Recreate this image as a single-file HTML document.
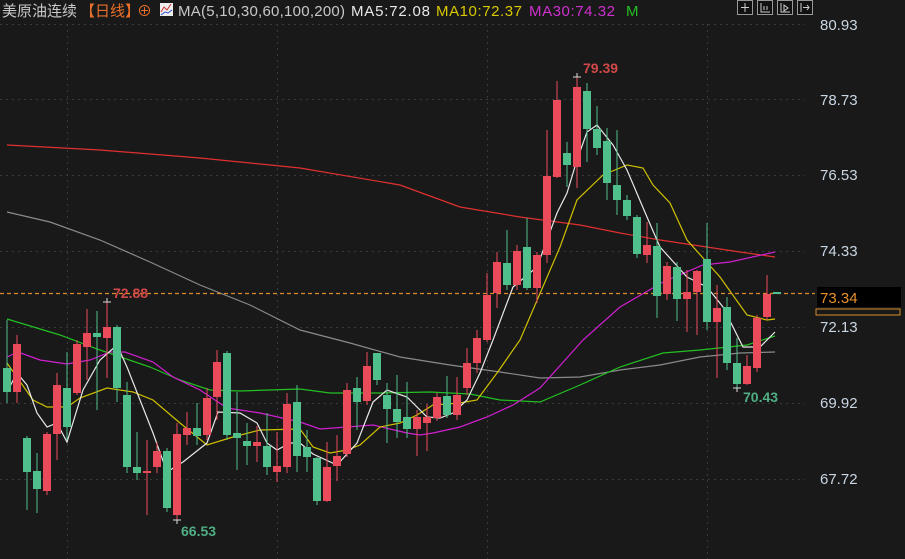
<!DOCTYPE html>
<html><head><meta charset="utf-8"><style>
html,body{margin:0;padding:0;background:#191919;width:905px;height:559px;overflow:hidden}
svg{display:block}
text{font-family:"Liberation Sans","Noto Sans CJK SC",sans-serif}
</style></head><body>
<svg width="905" height="559" xmlns="http://www.w3.org/2000/svg">
<rect width="905" height="559" fill="#191919"/>
<g stroke="#3a3a3a" stroke-dasharray="2,4" stroke-width="1">
<line x1="0" y1="24.5" x2="805" y2="24.5"/><line x1="0" y1="99.5" x2="805" y2="99.5"/>
<line x1="0" y1="175.5" x2="805" y2="175.5"/><line x1="0" y1="251.5" x2="805" y2="251.5"/>
<line x1="0" y1="327.5" x2="805" y2="327.5"/><line x1="0" y1="403.5" x2="805" y2="403.5"/>
<line x1="0" y1="479.5" x2="805" y2="479.5"/>
<line x1="67.5" y1="24" x2="67.5" y2="559"/><line x1="277.5" y1="24" x2="277.5" y2="559"/>
<line x1="487.5" y1="24" x2="487.5" y2="559"/><line x1="707.5" y1="24" x2="707.5" y2="559"/>
</g>
<g fill="none" stroke-width="1.2">
<polyline stroke="#e03030" points="7,145 100,150 200,158 300,168 400,185 460,207 520,217 580,225 620,233 660,240 700,246 740,252 775,257"/>
<polyline stroke="#8a8a8a" points="7,212 50,222 100,240 150,262 200,285 250,305 300,330 350,343 400,357 450,365 500,372 540,378 580,377 620,370 660,365 700,357 740,353 775,352"/>
<polyline stroke="#22c022" points="7,319 60,335 100,350 150,367 180,380 210,390 240,391 300,389 330,393 380,393 430,392 470,394 500,400 540,402 580,385 620,367 663,353 700,350 747,345 775,336"/>
<polyline stroke="#d020d0" points="7,357 18,352 40,360 67,364 90,360 110,352 125,352 153,362 173,377 200,390 227,408 260,413 300,422 320,429 347,427 373,425 407,433 420,435 433,433 460,427 487,417 513,405 540,388 583,340 620,307 663,282 703,265 730,262 775,252"/>
<polyline stroke="#d0c000" points="7,363 33,400 47,407 67,407 80,398 107,388 133,392 153,400 180,423 207,445 233,437 260,430 300,429 313,447 330,453 347,450 360,445 380,427 400,423 417,415 433,405 460,403 477,400 497,373 520,340 560,247 577,200 603,175 627,165 643,168 653,185 670,203 687,240 720,277 747,315 767,320 775,319"/>
<polyline stroke="#e8e8e8" points="7,392 17,373 27,385 37,413 47,427 57,423 67,442 83,390 100,360 117,345 127,367 140,400 153,433 167,472 183,462 207,443 218,412 240,413 257,423 267,443 277,450 290,443 300,443 313,454 337,465 357,443 373,402 387,390 407,397 427,417 440,418 453,413 467,400 480,373 493,340 513,287 537,267 557,213 567,193 577,160 587,132 597,125 613,145 627,170 647,217 660,247 687,277 707,287 723,307 743,347 760,347 775,332"/>
</g>
<line x1="0" y1="293.5" x2="815" y2="293.5" stroke="#d98a2a" stroke-dasharray="4,3" stroke-width="1.2"/>
<g id="c">
<line x1="7" y1="320" x2="7" y2="403" stroke="#4fbf8c"/><rect x="3" y="368" width="8" height="24" fill="#4fbf8c"/>
<line x1="17" y1="335" x2="17" y2="403" stroke="#e94b5b"/><rect x="13" y="344" width="8" height="48" fill="#e94b5b"/>
<line x1="27" y1="436" x2="27" y2="510" stroke="#4fbf8c"/><rect x="23" y="438" width="8" height="34" fill="#4fbf8c"/>
<line x1="37" y1="453" x2="37" y2="513" stroke="#4fbf8c"/><rect x="33" y="471" width="8" height="18" fill="#4fbf8c"/>
<line x1="47" y1="432" x2="47" y2="495" stroke="#e94b5b"/><rect x="43" y="434" width="8" height="57" fill="#e94b5b"/>
<line x1="57" y1="373" x2="57" y2="460" stroke="#e94b5b"/><rect x="53" y="385" width="8" height="49" fill="#e94b5b"/>
<line x1="67" y1="352" x2="67" y2="440" stroke="#4fbf8c"/><rect x="63" y="388" width="8" height="39" fill="#4fbf8c"/>
<line x1="77" y1="340" x2="77" y2="395" stroke="#e94b5b"/><rect x="73" y="344" width="8" height="49" fill="#e94b5b"/>
<line x1="87" y1="309" x2="87" y2="380" stroke="#e94b5b"/><rect x="83" y="333" width="8" height="14" fill="#e94b5b"/>
<line x1="97" y1="311" x2="97" y2="410" stroke="#4fbf8c"/><rect x="93" y="333" width="8" height="4" fill="#4fbf8c"/>
<line x1="107" y1="302" x2="107" y2="378" stroke="#e94b5b"/><rect x="103" y="327" width="8" height="11" fill="#e94b5b"/>
<line x1="117" y1="325" x2="117" y2="402" stroke="#4fbf8c"/><rect x="113" y="327" width="8" height="61" fill="#4fbf8c"/>
<line x1="127" y1="382" x2="127" y2="473" stroke="#4fbf8c"/><rect x="123" y="395" width="8" height="72" fill="#4fbf8c"/>
<line x1="137" y1="432" x2="137" y2="480" stroke="#4fbf8c"/><rect x="133" y="467" width="8" height="6" fill="#4fbf8c"/>
<line x1="147" y1="440" x2="147" y2="515" stroke="#e94b5b"/><rect x="143" y="471" width="8" height="2" fill="#e94b5b"/>
<line x1="157" y1="442" x2="157" y2="473" stroke="#e94b5b"/><rect x="153" y="451" width="8" height="16" fill="#e94b5b"/>
<line x1="167" y1="448" x2="167" y2="512" stroke="#4fbf8c"/><rect x="163" y="451" width="8" height="57" fill="#4fbf8c"/>
<line x1="177" y1="423" x2="177" y2="520" stroke="#e94b5b"/><rect x="173" y="434" width="8" height="81" fill="#e94b5b"/>
<line x1="187" y1="412" x2="187" y2="445" stroke="#e94b5b"/><rect x="183" y="428" width="8" height="7" fill="#e94b5b"/>
<line x1="197" y1="403" x2="197" y2="445" stroke="#4fbf8c"/><rect x="193" y="428" width="8" height="8" fill="#4fbf8c"/>
<line x1="207" y1="388" x2="207" y2="440" stroke="#e94b5b"/><rect x="203" y="398" width="8" height="37" fill="#e94b5b"/>
<line x1="217" y1="350" x2="217" y2="420" stroke="#e94b5b"/><rect x="213" y="362" width="8" height="35" fill="#e94b5b"/>
<line x1="227" y1="351" x2="227" y2="440" stroke="#4fbf8c"/><rect x="223" y="353" width="8" height="82" fill="#4fbf8c"/>
<line x1="237" y1="392" x2="237" y2="470" stroke="#4fbf8c"/><rect x="233" y="433" width="8" height="5" fill="#4fbf8c"/>
<line x1="247" y1="423" x2="247" y2="465" stroke="#4fbf8c"/><rect x="243" y="441" width="8" height="5" fill="#4fbf8c"/>
<line x1="257" y1="426" x2="257" y2="462" stroke="#e94b5b"/><rect x="253" y="442" width="8" height="4" fill="#e94b5b"/>
<line x1="267" y1="413" x2="267" y2="475" stroke="#4fbf8c"/><rect x="263" y="446" width="8" height="21" fill="#4fbf8c"/>
<line x1="277" y1="432" x2="277" y2="482" stroke="#e94b5b"/><rect x="273" y="466" width="8" height="6" fill="#e94b5b"/>
<line x1="287" y1="393" x2="287" y2="473" stroke="#e94b5b"/><rect x="283" y="404" width="8" height="63" fill="#e94b5b"/>
<line x1="297" y1="385" x2="297" y2="472" stroke="#4fbf8c"/><rect x="293" y="402" width="8" height="54" fill="#4fbf8c"/>
<line x1="307" y1="430" x2="307" y2="472" stroke="#4fbf8c"/><rect x="303" y="447" width="8" height="10" fill="#4fbf8c"/>
<line x1="317" y1="457" x2="317" y2="505" stroke="#4fbf8c"/><rect x="313" y="458" width="8" height="43" fill="#4fbf8c"/>
<line x1="327" y1="442" x2="327" y2="502" stroke="#e94b5b"/><rect x="323" y="467" width="8" height="34" fill="#e94b5b"/>
<line x1="337" y1="435" x2="337" y2="481" stroke="#e94b5b"/><rect x="333" y="456" width="8" height="10" fill="#e94b5b"/>
<line x1="347" y1="383" x2="347" y2="457" stroke="#e94b5b"/><rect x="343" y="390" width="8" height="64" fill="#e94b5b"/>
<line x1="357" y1="377" x2="357" y2="430" stroke="#4fbf8c"/><rect x="353" y="388" width="8" height="14" fill="#4fbf8c"/>
<line x1="367" y1="352" x2="367" y2="405" stroke="#e94b5b"/><rect x="363" y="366" width="8" height="35" fill="#e94b5b"/>
<line x1="377" y1="353" x2="377" y2="385" stroke="#4fbf8c"/><rect x="373" y="353" width="8" height="27" fill="#4fbf8c"/>
<line x1="387" y1="383" x2="387" y2="443" stroke="#4fbf8c"/><rect x="383" y="395" width="8" height="14" fill="#4fbf8c"/>
<line x1="397" y1="375" x2="397" y2="438" stroke="#4fbf8c"/><rect x="393" y="409" width="8" height="13" fill="#4fbf8c"/>
<line x1="407" y1="382" x2="407" y2="438" stroke="#4fbf8c"/><rect x="403" y="417" width="8" height="12" fill="#4fbf8c"/>
<line x1="417" y1="410" x2="417" y2="456" stroke="#e94b5b"/><rect x="413" y="417" width="8" height="12" fill="#e94b5b"/>
<line x1="427" y1="404" x2="427" y2="451" stroke="#e94b5b"/><rect x="423" y="417" width="8" height="6" fill="#e94b5b"/>
<line x1="437" y1="393" x2="437" y2="421" stroke="#e94b5b"/><rect x="433" y="397" width="8" height="21" fill="#e94b5b"/>
<line x1="447" y1="376" x2="447" y2="418" stroke="#4fbf8c"/><rect x="443" y="396" width="8" height="19" fill="#4fbf8c"/>
<line x1="457" y1="377" x2="457" y2="420" stroke="#e94b5b"/><rect x="453" y="395" width="8" height="20" fill="#e94b5b"/>
<line x1="467" y1="348" x2="467" y2="395" stroke="#e94b5b"/><rect x="463" y="363" width="8" height="25" fill="#e94b5b"/>
<line x1="477" y1="330" x2="477" y2="373" stroke="#e94b5b"/><rect x="473" y="338" width="8" height="25" fill="#e94b5b"/>
<line x1="487" y1="273" x2="487" y2="342" stroke="#e94b5b"/><rect x="483" y="295" width="8" height="45" fill="#e94b5b"/>
<line x1="497" y1="252" x2="497" y2="308" stroke="#e94b5b"/><rect x="493" y="262" width="8" height="31" fill="#e94b5b"/>
<line x1="507" y1="230" x2="507" y2="290" stroke="#4fbf8c"/><rect x="503" y="263" width="8" height="22" fill="#4fbf8c"/>
<line x1="517" y1="245" x2="517" y2="290" stroke="#e94b5b"/><rect x="513" y="251" width="8" height="34" fill="#e94b5b"/>
<line x1="527" y1="218" x2="527" y2="290" stroke="#4fbf8c"/><rect x="523" y="247" width="8" height="41" fill="#4fbf8c"/>
<line x1="537" y1="252" x2="537" y2="303" stroke="#e94b5b"/><rect x="533" y="255" width="8" height="33" fill="#e94b5b"/>
<line x1="547" y1="130" x2="547" y2="263" stroke="#e94b5b"/><rect x="543" y="176" width="8" height="79" fill="#e94b5b"/>
<line x1="557" y1="81" x2="557" y2="178" stroke="#e94b5b"/><rect x="553" y="100" width="8" height="77" fill="#e94b5b"/>
<line x1="567" y1="142" x2="567" y2="187" stroke="#4fbf8c"/><rect x="563" y="153" width="8" height="12" fill="#4fbf8c"/>
<line x1="577" y1="77" x2="577" y2="188" stroke="#e94b5b"/><rect x="573" y="87" width="8" height="80" fill="#e94b5b"/>
<line x1="587" y1="83" x2="587" y2="162" stroke="#4fbf8c"/><rect x="583" y="91" width="8" height="38" fill="#4fbf8c"/>
<line x1="597" y1="106" x2="597" y2="155" stroke="#4fbf8c"/><rect x="593" y="129" width="8" height="19" fill="#4fbf8c"/>
<line x1="607" y1="128" x2="607" y2="200" stroke="#4fbf8c"/><rect x="603" y="141" width="8" height="42" fill="#4fbf8c"/>
<line x1="617" y1="130" x2="617" y2="215" stroke="#4fbf8c"/><rect x="613" y="185" width="8" height="15" fill="#4fbf8c"/>
<line x1="627" y1="195" x2="627" y2="220" stroke="#4fbf8c"/><rect x="623" y="200" width="8" height="16" fill="#4fbf8c"/>
<line x1="637" y1="215" x2="637" y2="258" stroke="#4fbf8c"/><rect x="633" y="217" width="8" height="37" fill="#4fbf8c"/>
<line x1="647" y1="222" x2="647" y2="263" stroke="#e94b5b"/><rect x="643" y="245" width="8" height="10" fill="#e94b5b"/>
<line x1="657" y1="223" x2="657" y2="318" stroke="#4fbf8c"/><rect x="653" y="246" width="8" height="50" fill="#4fbf8c"/>
<line x1="667" y1="262" x2="667" y2="300" stroke="#e94b5b"/><rect x="663" y="266" width="8" height="28" fill="#e94b5b"/>
<line x1="677" y1="262" x2="677" y2="321" stroke="#4fbf8c"/><rect x="673" y="267" width="8" height="32" fill="#4fbf8c"/>
<line x1="687" y1="270" x2="687" y2="332" stroke="#e94b5b"/><rect x="683" y="292" width="8" height="7" fill="#e94b5b"/>
<line x1="697" y1="270" x2="697" y2="335" stroke="#e94b5b"/><rect x="693" y="271" width="8" height="21" fill="#e94b5b"/>
<line x1="707" y1="223" x2="707" y2="330" stroke="#4fbf8c"/><rect x="703" y="259" width="8" height="63" fill="#4fbf8c"/>
<line x1="717" y1="285" x2="717" y2="378" stroke="#e94b5b"/><rect x="713" y="308" width="8" height="14" fill="#e94b5b"/>
<line x1="727" y1="297" x2="727" y2="370" stroke="#4fbf8c"/><rect x="723" y="307" width="8" height="56" fill="#4fbf8c"/>
<line x1="737" y1="338" x2="737" y2="388" stroke="#4fbf8c"/><rect x="733" y="363" width="8" height="21" fill="#4fbf8c"/>
<line x1="747" y1="355" x2="747" y2="385" stroke="#e94b5b"/><rect x="743" y="366" width="8" height="18" fill="#e94b5b"/>
<line x1="757" y1="315" x2="757" y2="372" stroke="#e94b5b"/><rect x="753" y="318" width="8" height="50" fill="#e94b5b"/>
<line x1="767" y1="275" x2="767" y2="320" stroke="#e94b5b"/><rect x="763" y="294" width="8" height="23" fill="#e94b5b"/>
<rect x="773" y="292" width="8" height="2" fill="#4fbf8c"/>
</g>
<g stroke="#ddd" stroke-width="1">
<line x1="103" y1="302" x2="111" y2="302"/><line x1="107" y1="298" x2="107" y2="302"/>
<line x1="573" y1="77" x2="581" y2="77"/><line x1="577" y1="73" x2="577" y2="77"/>
<line x1="173" y1="520" x2="181" y2="520"/><line x1="177" y1="520" x2="177" y2="524"/>
<line x1="733" y1="388" x2="741" y2="388"/><line x1="737" y1="388" x2="737" y2="392"/>
</g>
<g font-size="14" font-weight="bold">
<text x="113" y="298" fill="#d04848">72.88</text>
<text x="583" y="73" fill="#d04848">79.39</text>
<text x="181" y="536" fill="#4fae84">66.53</text>
<text x="743" y="402" fill="#4fae84">70.43</text>
</g>
<g font-size="15" fill="#c9d6e3">
<text x="820" y="30">80.93</text><text x="820" y="105">78.73</text>
<text x="820" y="180">76.53</text><text x="820" y="256">74.33</text>
<text x="820" y="332">72.13</text><text x="820" y="408">69.92</text>
<text x="820" y="484">67.72</text>
</g>
<rect x="816" y="309" width="84" height="6" fill="none" stroke="#d98a2a"/>
<rect x="817" y="287" width="84" height="20" fill="#000"/>
<text x="820" y="303" font-size="15" fill="#e8902a">73.34</text>
<g fill="#111" stroke="#999">
<rect x="737.5" y="0.5" width="15" height="14"/><rect x="757.5" y="0.5" width="15" height="14"/>
<rect x="777.5" y="0.5" width="15" height="14"/><rect x="797.5" y="0.5" width="15" height="14"/>
</g>
<g stroke="#ccc" stroke-width="1" fill="none">
<path d="M745 3v9M741 7.5h8"/><path d="M761 3v9h9M764 6v4M767 6v4"/><path d="M781 3v9h9M784 5l4 3-4 3z"/><path d="M801 3v9M803 7.5h6M807 5l2 2.5-2 2.5"/>
</g>
<g font-size="15">
<text x="2" y="16" fill="#c8c8c8" textLength="75">美原油连续</text>
<text x="80" y="16" fill="#e8702a" textLength="60">【日线】</text>
<text x="137" y="16" fill="#e8702a">⊕</text>
<rect x="160" y="3" width="13" height="13" fill="#eee"/>
<path d="M161 12l3-5 3 3 4-6" stroke="#d03030" fill="none"/><path d="M161 15l4-3 3 1 4-3" stroke="#3050d0" fill="none"/>
<text x="178" y="16" fill="#c8c8c8" textLength="167">MA(5,10,30,60,100,200)</text>
<text x="351" y="16" fill="#e8e8e8" textLength="79">MA5:72.08</text>
<text x="436" y="16" fill="#d8c800" textLength="86">MA10:72.37</text>
<text x="529" y="16" fill="#d030d0" textLength="86">MA30:74.32</text>
<text x="626" y="16" fill="#22c022">M</text>
</g>
</svg>
</body></html>
